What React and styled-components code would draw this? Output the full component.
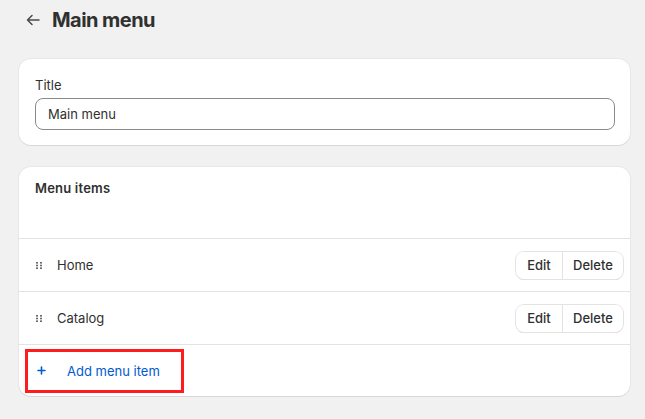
import React from "react";
import styled, { createGlobalStyle } from "styled-components";

const Global = createGlobalStyle`
  html, body { margin: 0; padding: 0; background: #f1f1f1; }
  body { font-family: Inter, "Noto Sans", sans-serif; color: #303030; font-size: 13px; -webkit-font-smoothing: antialiased; }
  * { box-sizing: border-box; }
`;

const Page = styled.div`
  padding: 0 15px 23px 19px;
  display: flex;
  flex-direction: column;
`;

const Header = styled.div`
  height: 40px;
  display: flex;
  align-items: center;
  gap: 11px;
  padding-left: 6px;
  margin-bottom: 19px;
`;

const BackButton = styled.button`
  width: 16px;
  height: 16px;
  padding: 0;
  border: 0;
  background: none;
  display: flex;
  align-items: center;
  justify-content: center;
  color: #4a4a4a;
`;

const Heading = styled.h1`
  margin: 0;
  font-size: 20px;
  font-weight: 700;
  letter-spacing: -0.55px;
  color: #303030;
`;

const Card = styled.section`
  background: #fff;
  border-radius: 12px;
  box-shadow: 0 1px 0 0 rgba(26, 26, 26, 0.07), 0 0 0 1px rgba(0,0,0,0.04);
  overflow: hidden;
  margin-bottom: ${(p) => p.$gap || 0}px;
`;

const FieldBody = styled.div`
  padding: 16px 15px 15px 16px;
  display: flex;
  flex-direction: column;
  gap: 3px;
`;

const Label = styled.label`
  line-height: 20px;
  font-size: 13px;
  color: #303030;
`;

const Input = styled.input`
  height: 32px;
  border: 1px solid #8a8a8a;
  border-radius: 8px;
  padding: 0 12px;
  font: inherit;
  font-size: 13px;
  color: #303030;
  outline: none;
`;

const CardHeader = styled.div`
  height: 71px;
  padding: 11px 16px 0;
`;

const CardTitle = styled.h2`
  margin: 0;
  font-size: 13px;
  font-weight: 600;
  line-height: 20px;
  letter-spacing: 0.2px;
`;

const Row = styled.div`
  height: 53px;
  border-top: 1px solid #e3e3e3;
  display: flex;
  align-items: center;
  padding: 0 7px 0 17px;
`;

const Handle = styled.span`
  width: 6px;
  display: flex;
  margin-right: 15px;
  color: #6b6b6b;
`;

const ItemName = styled.span`
  flex: 1;
  font-size: 13px;
`;

const ButtonGroup = styled.div`
  display: flex;
  border-radius: 8px;
  box-shadow: 0 0 0 1px #e3e3e3, 0 1px 0 0 #c7c7c7;
  height: 27px;
  overflow: hidden;
`;

const GroupButton = styled.button`
  border: 0;
  background: #fff;
  font: inherit;
  font-size: 13px;
  font-weight: 500;
  color: #303030;
  padding: 0;
  width: ${(p) => p.$w}px;
  & + & { border-left: 1px solid #e3e3e3; }
`;

const AddRow = styled.div`
  height: 52px;
  border-top: 1px solid #e3e3e3;
  display: flex;
  align-items: center;
  padding-left: 6px;
`;

const Highlight = styled.button`
  width: 159px;
  height: 44px;
  border: 3px solid #ff1c1c;
  background: #fff;
  display: flex;
  align-items: center;
  padding: 0 0 0 9px;
  font: inherit;
  color: #005bd3;
  font-size: 13px;
  cursor: pointer;
`;

const Plus = styled.span`
  width: 10px;
  display: flex;
  margin-right: 20px;
`;

const Items = ["Home", "Catalog"];

export default function App() {
  return (
    <>
      <Global />
      <Page>
        <Header>
          <BackButton aria-label="Back">
            <svg width="14" height="12" viewBox="0 0 14 12" fill="none" stroke="currentColor" strokeWidth="1.5" strokeLinecap="round" strokeLinejoin="round">
              <path d="M13 6H1.5M6 1.5L1.5 6 6 10.5" />
            </svg>
          </BackButton>
          <Heading>Main menu</Heading>
        </Header>

        <Card $gap={22}>
          <FieldBody>
            <Label htmlFor="title">Title</Label>
            <Input id="title" defaultValue="Main menu" />
          </FieldBody>
        </Card>

        <Card>
          <CardHeader>
            <CardTitle>Menu items</CardTitle>
          </CardHeader>
          {Items.map((name) => (
            <Row key={name}>
              <Handle>
                <svg width="6" height="7" viewBox="0 0 6 7" fill="currentColor">
                  <rect x="0" y="0" width="2" height="1.6" />
                  <rect x="4" y="0" width="2" height="1.6" />
                  <rect x="0" y="2.7" width="2" height="1.6" />
                  <rect x="4" y="2.7" width="2" height="1.6" />
                  <rect x="0" y="5.4" width="2" height="1.6" />
                  <rect x="4" y="5.4" width="2" height="1.6" />
                </svg>
              </Handle>
              <ItemName>{name}</ItemName>
              <ButtonGroup>
                <GroupButton $w={46}>Edit</GroupButton>
                <GroupButton $w={61}>Delete</GroupButton>
              </ButtonGroup>
            </Row>
          ))}
          <AddRow>
            <Highlight>
              <Plus>
                <svg width="9" height="9" viewBox="0 0 9 9" stroke="currentColor" strokeWidth="1.6" strokeLinecap="round">
                  <path d="M4.5 1v7M1 4.5h7" />
                </svg>
              </Plus>
              Add menu item
            </Highlight>
          </AddRow>
        </Card>
      </Page>
    </>
  );
}
